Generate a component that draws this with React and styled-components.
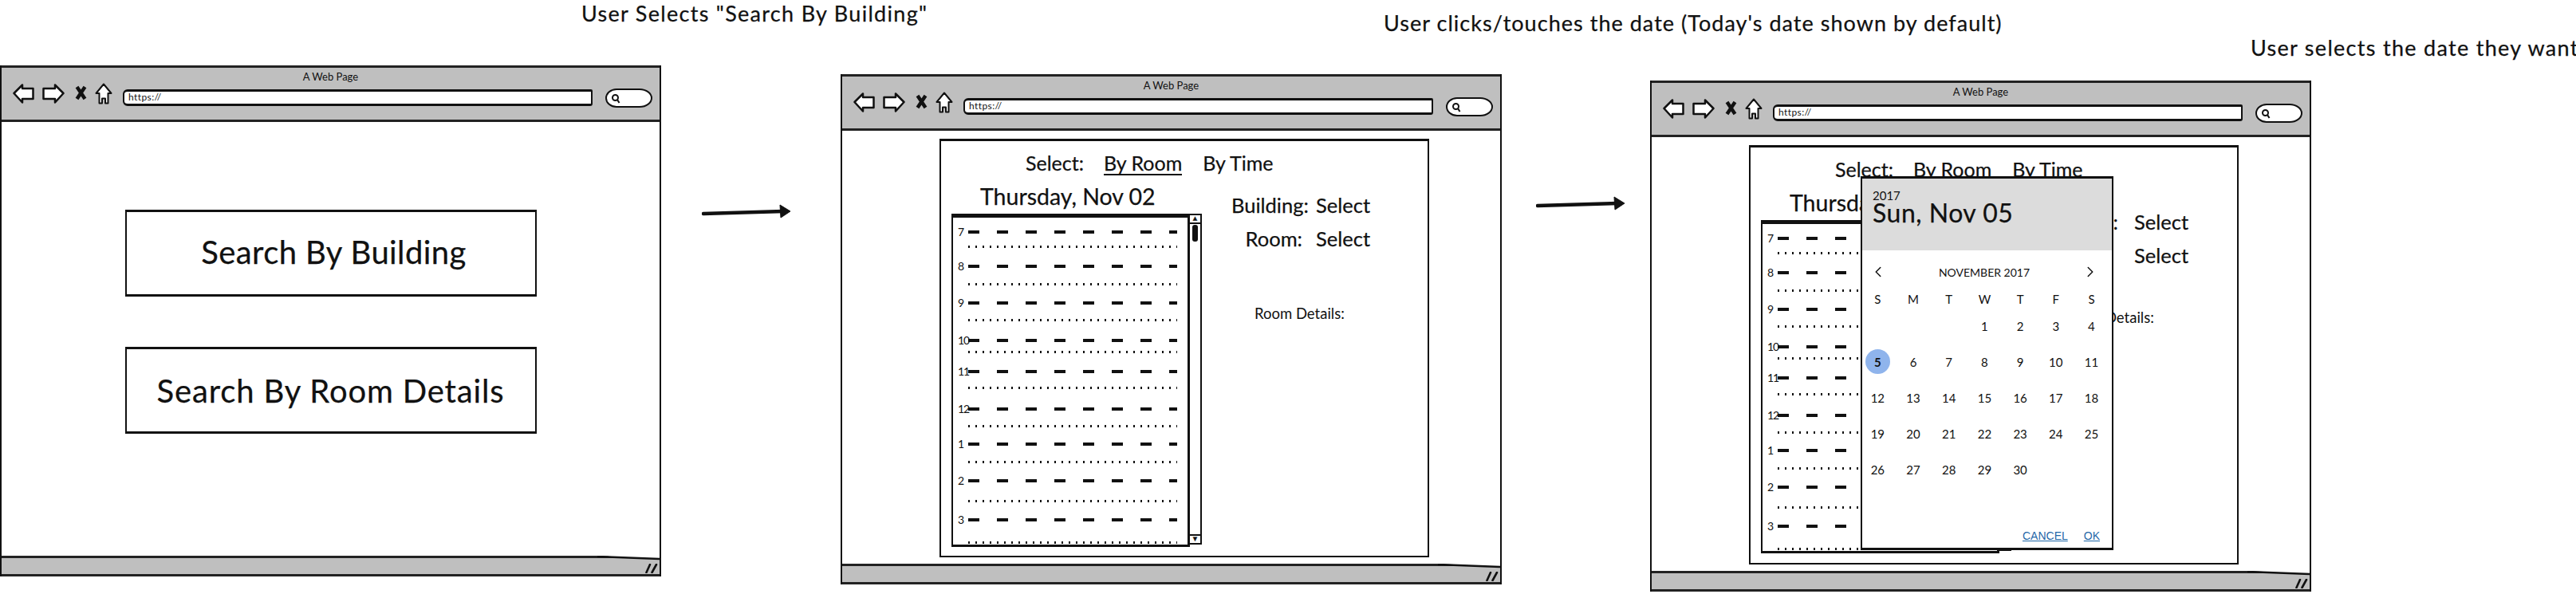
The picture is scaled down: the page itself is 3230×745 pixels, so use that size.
import React from 'react';
import styled, { createGlobalStyle } from 'styled-components';
import { ChevronLeft, ChevronRight } from 'lucide-react';

const slots = [
  { label: '7', hour: 19, half: 24 },
  { label: '8', hour: 23, half: 23 },
  { label: '9', hour: 22, half: 25 },
  { label: '10', hour: 15, half: 24 },
  { label: '11', hour: 21, half: 26 },
  { label: '12', hour: 22, half: 22 },
  { label: '1', hour: 23, half: 23 },
  { label: '2', hour: 26, half: 23 },
  { label: '3', hour: 29, half: 0 },
];

const weekdays = ['S', 'M', 'T', 'W', 'T', 'F', 'S'];
const blanks = [1, 2, 3];
const days = Array.from({ length: 30 }, (_, i) => i + 1);

function NavIcons() {
  return (
    <>
      <NavIcon width="27" height="25" viewBox="0 0 27 25" $mt={1} $mr={10}>
        <path d="M1.5 12 L12 1.5 L12 6 L25.5 6 L25.5 19 L12 19 L12 23.5 Z" fill="#fff" stroke="#111" strokeWidth="2.5" strokeLinejoin="round" />
      </NavIcon>
      <NavIcon width="28" height="25" viewBox="0 0 28 25" $mt={1} $mr={13}>
        <path d="M26.5 12 L16 1.5 L16 6 L1.5 6 L1.5 19 L16 19 L16 23.5 Z" fill="#fff" stroke="#111" strokeWidth="2.5" strokeLinejoin="round" />
      </NavIcon>
      <NavIcon width="15" height="19" viewBox="0 0 15 19" $mt={3} $mr={10}>
        <path d="M2.5 2 L12.5 17 M12.5 2 L2.5 17" fill="none" stroke="#111" strokeWidth="4.5" />
      </NavIcon>
      <NavIcon width="22" height="27" viewBox="0 0 22 27" $mt={0} $mr={13}>
        <path d="M11 1.5 L20.5 13 L16.5 13 L16.5 25.5 L13 25.5 L13 19.5 L9 19.5 L9 25.5 L5.5 25.5 L5.5 13 L1.5 13 Z" fill="#fff" stroke="#111" strokeWidth="2" strokeLinejoin="round" />
      </NavIcon>
    </>
  );
}

function Browser({ height, children }) {
  return (
    <Window $height={height}>
      <TitleBar>
        <PageTitle>A Web Page</PageTitle>
        <Toolbar>
          <NavIcons />
          <UrlBar>https://</UrlBar>
          <SearchBox>
            <svg width="12" height="13" viewBox="0 0 12 13">
              <circle cx="5.5" cy="5.5" r="3.5" fill="none" stroke="#111" strokeWidth="2" />
              <path d="M8 8 L10.5 12" stroke="#111" strokeWidth="2" />
            </svg>
          </SearchBox>
        </Toolbar>
      </TitleBar>
      <Content>{children}</Content>
      <StatusBar>
        <EdgeWedge width="78" height="6" viewBox="0 0 78 6">
          <path d="M0 0 L78 0 L78 4 Z" fill="#fff" />
          <path d="M0 1 L78 4" stroke="#111" strokeWidth="2.5" fill="none" />
        </EdgeWedge>
        <Grip width="16" height="12" viewBox="0 0 16 12">
          <path d="M6 1 L1.5 11 M14 1 L8.5 11" stroke="#111" strokeWidth="2.6" strokeLinecap="round" />
        </Grip>
      </StatusBar>
    </Window>
  );
}

function RoomForm({ shifted, children }) {
  return (
    <Panel>
      <Tabs>
        <TabLabel>Select:</TabLabel>
        <Tab $active>By Room</Tab>
        <Tab>By Time</Tab>
      </Tabs>
      <PanelBody>
        <DayColumn>
          <DayTitle>Thursday, Nov 02</DayTitle>
          <ScheduleWrap>
            <Schedule>
              {slots.map((s) => (
                <React.Fragment key={s.label}>
                  <HourRow $h={s.hour}>
                    <HourLabel>{s.label}</HourLabel>
                    <DashLine />
                  </HourRow>
                  <HalfRow $h={s.half} />
                </React.Fragment>
              ))}
            </Schedule>
            <ScrollBar>
              <ScrollButton>▲</ScrollButton>
              <ScrollThumb />
              <ScrollButton $bottom>▼</ScrollButton>
            </ScrollBar>
          </ScheduleWrap>
        </DayColumn>
        <Fields>
          <FieldGrid $shifted={shifted}>
            <FieldLabel>Building:</FieldLabel>
            <FieldValue>Select</FieldValue>
            <FieldLabel>Room:</FieldLabel>
            <FieldValue>Select</FieldValue>
          </FieldGrid>
          <RoomDetails $shifted={shifted}>Room Details:</RoomDetails>
        </Fields>
      </PanelBody>
      {children}
    </Panel>
  );
}

function DatePicker() {
  return (
    <Calendar>
      <CalHeader>
        <CalYear>2017</CalYear>
        <CalDate>Sun, Nov 05</CalDate>
      </CalHeader>
      <MonthRow>
        <ChevronLeft size={22} strokeWidth={1.6} />
        <MonthName>NOVEMBER 2017</MonthName>
        <ChevronRight size={22} strokeWidth={1.6} />
      </MonthRow>
      <WeekRow>
        {weekdays.map((d, i) => (
          <WeekDay key={i}>{d}</WeekDay>
        ))}
      </WeekRow>
      <DayGrid>
        {blanks.map((b) => (
          <span key={b} />
        ))}
        {days.map((d) => (
          <DayCell key={d} $selected={d === 5}>
            {d}
          </DayCell>
        ))}
      </DayGrid>
      <CalFooter>
        <CalAction>CANCEL</CalAction>
        <CalAction>OK</CalAction>
      </CalFooter>
    </Calendar>
  );
}

function Arrow() {
  return (
    <svg width="112" height="18" viewBox="0 0 112 18">
      <path d="M2 12 L102 9" stroke="#111" strokeWidth="4.5" strokeLinecap="round" fill="none" />
      <path d="M98 1 L111 9 L99 17 Z" fill="#111" stroke="#111" strokeLinejoin="round" />
    </svg>
  );
}

export default function App() {
  return (
    <>
      <GlobalStyle />
      <Page>
        <Step>
          <Caption $left={729} $top={0} $bottom={48} $spacing={1.3}>User Selects "Search By Building"</Caption>
          <Browser height={641}>
            <Landing>
              <BigButton $padLeft={8} $padBottom={3} $spacing={0.4}>Search By Building</BigButton>
              <BigButton $padLeft={0} $padBottom={0} $spacing={0.85}>Search By Room Details</BigButton>
            </Landing>
          </Browser>
        </Step>
        <ArrowSlot $width={225} $top={256} $left={51}>
          <Arrow />
        </ArrowSlot>
        <Step>
          <Caption $left={681} $top={12} $bottom={47} $spacing={1.03}>User clicks/touches the date (Today's date shown by default)</Caption>
          <Browser height={640}>
            <FormArea>
              <RoomForm />
            </FormArea>
          </Browser>
        </Step>
        <ArrowSlot $width={186} $top={246} $left={43}>
          <Arrow />
        </ArrowSlot>
        <Step>
          <Caption $left={753} $top={43} $bottom={24} $spacing={1.3}>User selects the date they want</Caption>
          <Browser height={641}>
            <FormArea>
              <RoomForm shifted>
                <DatePicker />
              </RoomForm>
            </FormArea>
          </Browser>
        </Step>
      </Page>
    </>
  );
}

const GlobalStyle = createGlobalStyle`
  html, body {
    margin: 0;
    padding: 0;
    background: #fff;
    overflow: hidden;
  }
  * { box-sizing: border-box; }
`;

const Page = styled.div`
  display: flex;
  align-items: flex-start;
  width: 3230px;
  height: 745px;
  font-family: Lato, "Open Sans", sans-serif;
  color: #111;
  -webkit-text-stroke: 0.25px #111;
`;

const Step = styled.div`
  display: flex;
  flex-direction: column;
  flex: none;
  width: 829px;
`;

const Caption = styled.div`
  margin: ${(p) => p.$top}px 0 ${(p) => p.$bottom}px ${(p) => p.$left}px;
  height: 34px;
  line-height: 34px;
  font-size: 27px;
  letter-spacing: ${(p) => p.$spacing}px;
  white-space: nowrap;
`;

const ArrowSlot = styled.div`
  flex: none;
  width: ${(p) => p.$width}px;
  padding-top: ${(p) => p.$top}px;
  padding-left: ${(p) => p.$left}px;
`;

const Window = styled.div`
  display: flex;
  flex-direction: column;
  height: ${(p) => p.$height}px;
  border-left: 2px solid #111;
  border-right: 2px solid #111;
  background: #fff;
`;

const TitleBar = styled.div`
  flex: none;
  height: 71px;
  background: #bfbfbf;
  border-top: 3px solid #222;
  border-bottom: 3px solid #222;
`;

const PageTitle = styled.div`
  height: 16px;
  margin-top: 3px;
  line-height: 16px;
  text-align: center;
  font-size: 13px;
  -webkit-text-stroke: 0;
`;

const Toolbar = styled.div`
  display: flex;
  align-items: flex-start;
  height: 32px;
  padding: 0 9px 0 14px;
`;

const NavIcon = styled.svg`
  flex: none;
  margin-top: ${(p) => p.$mt}px;
  margin-right: ${(p) => p.$mr}px;
`;

const UrlBar = styled.div`
  flex: 1;
  height: 21px;
  margin: 8px 16px 0 0;
  padding-left: 5px;
  background: #fff;
  border: 2px solid #111;
  border-width: 3px 2px 3px 2px;
  border-radius: 6px 2px 3px 6px;
  font-size: 12px;
  line-height: 14px;
  letter-spacing: 0.4px;
  -webkit-text-stroke: 0;
`;

const SearchBox = styled.div`
  flex: none;
  display: flex;
  align-items: center;
  width: 59px;
  height: 24px;
  margin-top: 7px;
  padding-left: 5px;
  background: #fff;
  border: 2.5px solid #111;
  border-radius: 14px 16px 16px 14px / 12px;
`;

const Content = styled.div`
  position: relative;
  flex: 1;
  display: flex;
  flex-direction: column;
  min-height: 0;
`;

const StatusBar = styled.div`
  position: relative;
  flex: none;
  height: 26px;
  background: #bfbfbf;
  border-top: 3px solid #222;
  border-bottom: 3px solid #222;
`;

const EdgeWedge = styled.svg`
  position: absolute;
  top: -3px;
  right: 0;
`;

const Grip = styled.svg`
  position: absolute;
  right: 2px;
  bottom: 1px;
`;

const Landing = styled.div`
  display: flex;
  flex-direction: column;
  align-items: center;
  gap: 63px;
  padding-top: 110px;
`;

const BigButton = styled.div`
  display: flex;
  align-items: center;
  justify-content: center;
  width: 516px;
  height: 109px;
  padding-left: ${(p) => p.$padLeft}px;
  padding-bottom: ${(p) => p.$padBottom}px;
  background: #fff;
  border: 2px solid #111;
  border-top-width: 3px;
  border-bottom-width: 3px;
  font-size: 40px;
  letter-spacing: ${(p) => p.$spacing}px;
`;

const FormArea = styled.div`
  flex: 1;
  display: flex;
  min-height: 0;
  padding: 10px 0 8px 122px;
`;

const Panel = styled.div`
  position: relative;
  display: flex;
  flex-direction: column;
  width: 614px;
  padding: 10px 0 0 13px;
  border: 2px solid #111;
  border-top-width: 3px;
`;

const Tabs = styled.div`
  display: flex;
  height: 34px;
  padding-left: 93px;
  line-height: 34px;
  font-size: 25px;
`;

const TabLabel = styled.span`
  margin-right: 25px;
`;

const Tab = styled.span`
  align-self: flex-start;
  height: 33px;
  margin-right: 26px;
  border-bottom: ${(p) => (p.$active ? '2px solid #111' : 'none')};
`;

const PanelBody = styled.div`
  display: flex;
  align-items: flex-start;
`;

const DayColumn = styled.div`
  flex: none;
  width: 314px;
`;

const DayTitle = styled.div`
  height: 34px;
  margin: 8px 0 5px;
  padding-left: 36px;
  line-height: 34px;
  font-size: 28.5px;
  white-space: nowrap;
`;

const ScheduleWrap = styled.div`
  display: flex;
  align-items: flex-start;
`;

const Schedule = styled.div`
  flex: none;
  width: 299px;
  height: 418px;
  padding: 16px 0 0 6px;
  border: 2px solid #111;
  border-top-width: 5px;
  border-right-width: 3px;
  border-bottom-width: 3px;
  overflow: hidden;
`;

const HourRow = styled.div`
  display: flex;
  align-items: center;
  height: 4px;
  margin-bottom: ${(p) => p.$h - 4}px;
`;

const HourLabel = styled.span`
  flex: none;
  width: 13px;
  font-size: 14px;
  line-height: 4px;
  letter-spacing: -1px;
  -webkit-text-stroke: 0;
`;

const DashLine = styled.div`
  width: 262px;
  height: 4px;
  background: repeating-linear-gradient(90deg, #111 0 14px, transparent 14px 36px);
`;

const HalfRow = styled.div`
  width: 262px;
  height: 3px;
  margin-left: 13px;
  margin-bottom: ${(p) => p.$h - 3}px;
  background: repeating-linear-gradient(90deg, #111 0 2px, transparent 2px 9px);
`;

const ScrollBar = styled.div`
  flex: none;
  display: flex;
  flex-direction: column;
  width: 15px;
  height: 415px;
  background: #fff;
  border: 2px solid #111;
  border-left: none;
`;

const ScrollButton = styled.div`
  display: flex;
  align-items: center;
  justify-content: center;
  height: 11px;
  margin-top: ${(p) => (p.$bottom ? 'auto' : '0')};
  border-top: ${(p) => (p.$bottom ? '2px solid #111' : 'none')};
  border-bottom: ${(p) => (p.$bottom ? 'none' : '2px solid #111')};
  font-family: "DejaVu Sans", sans-serif;
  font-size: 7px;
  line-height: 1;
`;

const ScrollThumb = styled.div`
  width: 7px;
  height: 21px;
  margin: 1px auto 0;
  background: #111;
  border-radius: 3px;
`;

const Fields = styled.div`
  flex: none;
  margin-left: 37px;
`;

const FieldGrid = styled.div`
  display: grid;
  grid-template-columns: 89px auto;
  column-gap: ${(p) => (p.$shifted ? 28 : 17)}px;
  row-gap: 10px;
  padding-top: ${(p) => (p.$shifted ? 33 : 20)}px;
  line-height: 32px;
  font-size: 25.5px;
`;

const FieldLabel = styled.span`
  text-align: right;
  white-space: nowrap;
`;

const FieldValue = styled.span``;

const RoomDetails = styled.div`
  margin: ${(p) => (p.$shifted ? 50 : 66)}px 0 0 29px;
  line-height: 24px;
  font-size: 18.5px;
  white-space: nowrap;
  -webkit-text-stroke: 0;
`;

const Calendar = styled.div`
  position: absolute;
  top: 36px;
  left: 138px;
  display: flex;
  flex-direction: column;
  width: 317px;
  height: 469px;
  background: #fff;
  border: 2px solid #111;
  border-top-width: 3px;
  border-bottom-width: 3px;
`;

const CalHeader = styled.div`
  flex: none;
  height: 90px;
  padding: 14px 0 0 13px;
  background: #dcdcdc;
`;

const CalYear = styled.div`
  line-height: 14px;
  font-size: 15px;
  -webkit-text-stroke: 0;
`;

const CalDate = styled.div`
  line-height: 30px;
  font-size: 32px;
  letter-spacing: 0.5px;
  white-space: nowrap;
`;

const MonthRow = styled.div`
  display: flex;
  align-items: center;
  justify-content: space-between;
  height: 30px;
  margin-top: 12px;
  padding: 0 16px 0 9px;
`;

const MonthName = styled.span`
  font-size: 14px;
  -webkit-text-stroke: 0;
`;

const WeekRow = styled.div`
  display: grid;
  grid-template-columns: repeat(7, 44.7px);
  height: 22px;
  margin: 8px 0 0 -3px;
`;

const WeekDay = styled.span`
  text-align: center;
  font-size: 15px;
  line-height: 22px;
  -webkit-text-stroke: 0;
`;

const DayGrid = styled.div`
  display: grid;
  grid-template-columns: repeat(7, 44.7px);
  grid-auto-rows: 45px;
  margin-left: -3px;
`;

const DayCell = styled.span`
  display: flex;
  align-items: center;
  justify-content: center;
  font-size: 15px;
  font-weight: ${(p) => (p.$selected ? 700 : 400)};
  -webkit-text-stroke: 0;
  position: relative;
  z-index: 0;
  &::before {
    content: '';
    display: ${(p) => (p.$selected ? 'block' : 'none')};
    position: absolute;
    z-index: -1;
    left: 50%;
    top: 50%;
    width: 31px;
    height: 31px;
    margin: -15.5px 0 0 -15.5px;
    border-radius: 50%;
    background: #8fb4ec;
  }
`;

const CalFooter = styled.div`
  display: flex;
  justify-content: flex-end;
  gap: 20px;
  margin-top: auto;
  padding: 0 15px 6px 0;
`;

const CalAction = styled.span`
  line-height: 17px;
  font-family: "Liberation Sans", sans-serif;
  font-size: 14px;
  color: #1f67a8;
  text-decoration: underline;
  -webkit-text-stroke: 0;
`;
